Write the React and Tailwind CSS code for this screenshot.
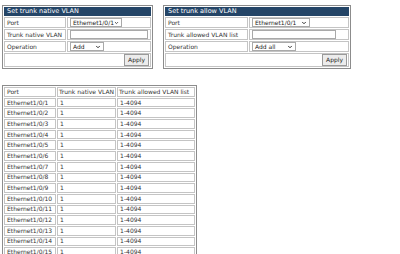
import { ChevronDown } from "lucide-react";

const ports = Array.from({ length: 15 }, (_, i) => `Ethernet1/0/${i + 1}`);

function FakeSelect({ value, width }) {
    return (
        <div
            className={`flex items-center justify-between h-[9px] border border-[#a9a9a9] bg-white pl-[2px] pr-[2px] ${width}`}
        >
            <span className="leading-none text-[6px] text-[#222]">{value}</span>
            <ChevronDown className="w-[6px] h-[6px] text-[#333]" strokeWidth={4} />
        </div>
    );
}

function Panel({ title, labelWidth, width, rows }) {
    return (
        <table
            className={`border-separate border-spacing-[1px] border border-[#8c8c8c] bg-white whitespace-nowrap ${width}`}
        >
            <tbody>
                <tr>
                    <td
                        colSpan={2}
                        className="bg-[#244567] text-white text-[6.5px] px-[3px] h-[9px] leading-none"
                    >
                        {title}
                    </td>
                </tr>
                {rows.map((r) => (
                    <tr key={r.label}>
                        <td
                            className={`border border-[#c4c4c4] px-[2px] h-[11px] text-[6px] text-[#333] leading-none ${labelWidth}`}
                        >
                            {r.label}
                        </td>
                        <td className="border border-[#c4c4c4] px-[2px] h-[11px]">
                            {r.field}
                        </td>
                    </tr>
                ))}
                <tr>
                    <td colSpan={2} className="border border-[#c4c4c4] h-[12px] px-[1px]">
                        <div className="flex justify-end">
                            <div className="border border-[#9a9a9a] bg-[#ececec] text-[6px] text-[#222] leading-none px-[3px] py-[2px]">
                                Apply
                            </div>
                        </div>
                    </td>
                </tr>
            </tbody>
        </table>
    );
}

function App() {
    return (
        <div
            className="w-[400px] h-[254px] overflow-hidden bg-white text-[#333]"
            style={{ fontFamily: '"DejaVu Sans", Verdana, sans-serif' }}
        >
            <div className="flex items-start gap-[10px] pl-[2px] pt-[5px]">
                <Panel
                    title="Set trunk native VLAN"
                    width="w-[151px]"
                    labelWidth="w-[62px]"
                    rows={[
                        { label: "Port", field: <FakeSelect value="Ethemet1/0/1" width="w-[52px]" /> },
                        {
                            label: "Trunk native VLAN",
                            field: <div className="h-[9px] w-full border border-[#a9a9a9] bg-white" />,
                        },
                        { label: "Operation", field: <FakeSelect value="Add" width="w-[34px]" /> },
                    ]}
                />
                <Panel
                    title="Set trunk allow VLAN"
                    width="w-[188px]"
                    labelWidth="w-[83px]"
                    rows={[
                        { label: "Port", field: <FakeSelect value="Ethernet1/0/1" width="w-[58px]" /> },
                        {
                            label: "Trunk allowed VLAN list",
                            field: <div className="h-[9px] w-[84px] border border-[#a9a9a9] bg-white" />,
                        },
                        { label: "Operation", field: <FakeSelect value="Add all" width="w-[44px]" /> },
                    ]}
                />
            </div>

            <div className="pl-[2px] pt-[16px]">
                <table className="border-separate border-spacing-[1px] border border-[#8c8c8c] w-[195px] text-[6px] leading-none whitespace-nowrap">
                    <thead>
                        <tr>
                            <td className="border border-[#c4c4c4] px-[2px] h-[9.7px] w-[52px]">Port</td>
                            <td className="border border-[#c4c4c4] px-[1px] h-[9.7px] w-[58px]">Trunk native VLAN</td>
                            <td className="border border-[#c4c4c4] px-[1px] h-[9.7px]">Trunk allowed VLAN list</td>
                        </tr>
                    </thead>
                    <tbody>
                        {ports.map((p) => (
                            <tr key={p}>
                                <td className="border border-[#c4c4c4] px-[2px] h-[9.7px]">{p}</td>
                                <td className="border border-[#c4c4c4] px-[2px] h-[9.7px]">1</td>
                                <td className="border border-[#c4c4c4] px-[2px] h-[9.7px]">1-4094</td>
                            </tr>
                        ))}
                    </tbody>
                </table>
            </div>
        </div>
    );
}

export default App;
